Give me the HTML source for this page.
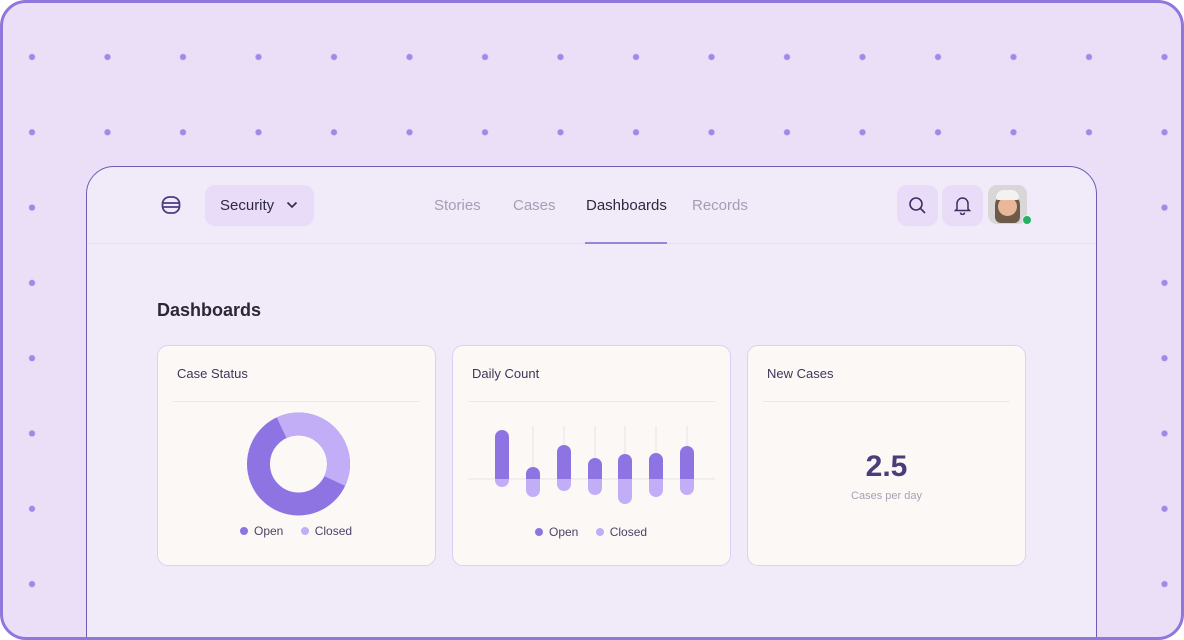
<!DOCTYPE html>
<html><head><meta charset="utf-8"><style>
*{box-sizing:border-box;margin:0;padding:0}
body{width:1184px;height:640px;overflow:hidden;background:#fff;font-family:"Liberation Sans",sans-serif}
.frame{position:absolute;left:0;top:0;width:1184px;height:640px;border:3px solid #8f78dc;border-radius:26px;background-color:#ebdff8;
background-image:radial-gradient(circle at center,#a08ae6 2.8px,transparent 3.4px);background-size:75.5px 75.3px;background-position:-8.75px 16.35px;overflow:hidden}
.win{position:absolute;left:83px;top:163px;width:1011px;height:500px;border:1.5px solid #6f5cb5;border-radius:28px;background:#f1eaf8;overflow:hidden}
.nav{position:absolute;left:0;top:0;width:100%;height:77px;border-bottom:1px solid #e8def3}
.sec{position:absolute;left:118px;top:18px;width:109px;height:41px;border-radius:10px;background:#e8dcf8;font-size:15px;color:#2e2940;padding:12px 0 0 15px}
.tabs span{position:absolute;top:30px;font-size:15px;color:#a69db5}
.btn{position:absolute;top:18px;width:41px;height:41px;border-radius:10px;background:#e8dcf8}
h1{position:absolute;left:70px;top:133px;font-size:18px;font-weight:bold;color:#2b2833}
.card{position:absolute;top:178px;width:279px;height:221px;border:1.5px solid #dcd0f3;border-radius:11px;background:#fcf8f6}
.card .t{position:absolute;left:19px;top:20px;font-size:13px;color:#3d3659}
.card .hr{position:absolute;left:15px;right:15px;top:55px;height:1px;background:#efe8ea}
.lg{position:absolute;font-size:12px;color:#4a4466}
.dot{display:inline-block;width:8px;height:8px;border-radius:50%;vertical-align:0px;margin-right:6px}
</style></head><body>
<div class="frame">
<div class="win">
 <div class="nav">
  <svg style="position:absolute;left:73px;top:27px" width="22" height="22" viewBox="0 0 22 22" fill="none" stroke="#4a3d80" stroke-width="1.8"><rect x="2.5" y="3" width="17" height="16" rx="7"/><path d="M2.5 9h17M2.5 13h17"/></svg>
  <div class="sec">Security <svg style="margin-left:8px;vertical-align:1px" width="12" height="8" viewBox="0 0 12 8" fill="none" stroke="#2e2940" stroke-width="1.6"><path d="M1.5 1.5l4.5 4.5 4.5-4.5"/></svg></div>
  <div class="tabs"><span style="left:347px">Stories</span><span style="left:426px">Cases</span><span style="left:499px;color:#2e2940">Dashboards</span><span style="left:605px">Records</span></div>
  <div style="position:absolute;left:498px;top:75px;width:82px;height:2px;background:#9a86d8"></div>
  <div class="btn" style="left:810px"><svg style="position:absolute;left:11px;top:11px" width="19" height="19" viewBox="0 0 19 19" fill="none" stroke="#3a3060" stroke-width="1.6"><circle cx="8" cy="8" r="6"/><path d="M12.5 12.5l4.5 4.5"/></svg></div>
  <div class="btn" style="left:855px"><svg style="position:absolute;left:11px;top:10px" width="19" height="20" viewBox="0 0 19 20" fill="none" stroke="#3a3060" stroke-width="1.5"><path d="M4 14V8.5a5.5 5.5 0 0 1 11 0V14l1.5 1.5h-14z"/><path d="M7.5 17.5a2 2 0 0 0 4 0"/></svg></div>
  <div style="position:absolute;left:901px;top:18px;width:39px;height:39px;border-radius:9px;background:#d9d6d8;overflow:hidden">
   <div style="position:absolute;left:7px;top:8px;width:25px;height:30px;border-radius:12px 12px 6px 6px;background:#6d5a4a"></div>
   <div style="position:absolute;left:10px;top:12px;width:19px;height:19px;border-radius:50%;background:#e9b89a"></div>
   <div style="position:absolute;left:8px;top:5px;width:23px;height:10px;border-radius:11px 11px 3px 3px;background:#f4f2f0"></div>
  </div>
  <div style="position:absolute;left:935px;top:48px;width:10px;height:10px;border-radius:50%;background:#22b35e;border:1.5px solid #f1eaf8"></div>
 </div>
 <h1>Dashboards</h1>
 <div class="card" style="left:70px"><div class="t">Case Status</div><div class="hr"></div>
  <svg style="position:absolute;left:0;top:0" width="279" height="221">
   <circle cx="140.5" cy="118" r="40" fill="none" stroke="#8d74e2" stroke-width="23"/>
   <circle cx="140.5" cy="118" r="40" fill="none" stroke="#c1aef6" stroke-width="23" stroke-dasharray="97.7 300" transform="rotate(-115 140.5 118)"/>
  </svg>
  <div class="lg" style="left:82px;top:178px"><span class="dot" style="background:#8d74e2"></span>Open <span class="dot" style="background:#c1aef6;margin-left:14px"></span>Closed</div>
 </div>
 <div class="card" style="left:365px"><div class="t">Daily Count</div><div class="hr"></div>
  <svg style="position:absolute;left:0;top:0" width="279" height="221" id="bars">
   <defs><clipPath id="up"><rect x="0" y="0" width="279" height="133"/></clipPath><clipPath id="dn"><rect x="0" y="133" width="279" height="100"/></clipPath></defs>
   <g stroke="#e9e4e6" stroke-width="1"><path d="M80 80V133M111 80V133M142 80V133M172 80V133M203 80V133M234 80V133M15 133H262"/></g>
  </svg>
  <div class="lg" style="left:82px;top:179px"><span class="dot" style="background:#8d74e2"></span>Open <span class="dot" style="background:#c1aef6;margin-left:14px"></span>Closed</div>
 </div>
 <div class="card" style="left:660px"><div class="t">New Cases</div><div class="hr"></div>
  <div style="position:absolute;left:0;width:100%;top:104px;text-align:center;font-size:30px;font-weight:bold;color:#4a3d7a">2.5</div>
  <div style="position:absolute;left:0;width:100%;top:144px;text-align:center;font-size:11px;color:#a8a0b4">Cases per day</div>
 </div>
</div>
</div>
<script>
var s=document.getElementById('bars'),ns='http://www.w3.org/2000/svg';
var xs=[49,80,111,142,172,203,234],tp=[84,121,99,112,108,107,100],bt=[141,151,145,149,158,151,149];
function r(x,y,h,c,cl){var e=document.createElementNS(ns,'rect');e.setAttribute('x',x-7);e.setAttribute('y',y);e.setAttribute('width',14);e.setAttribute('height',h);e.setAttribute('rx',7);e.setAttribute('fill',c);e.setAttribute('clip-path','url(#'+cl+')');s.appendChild(e);}
for(var i=0;i<7;i++){r(xs[i],tp[i],bt[i]-tp[i],'#8d74e2','up');r(xs[i],tp[i],bt[i]-tp[i],'#c1aef6','dn');}
</script>
</body></html>
